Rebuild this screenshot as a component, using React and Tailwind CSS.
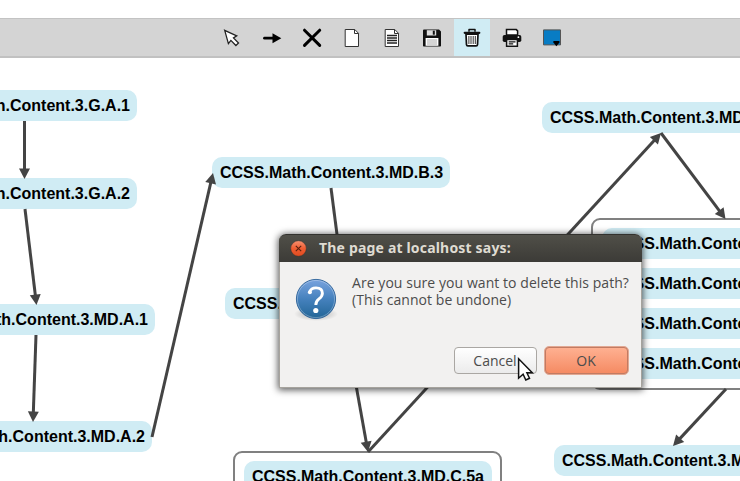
import React from "react";

const NODES = [
  { label: "CCSS.Math.Content.3.G.A.1", pos: "right-[603px] top-[32.4px]" },
  { label: "CCSS.Math.Content.3.G.A.2", pos: "right-[603px] top-[120.4px]" },
  { label: "CCSS.Math.Content.3.MD.A.1", pos: "right-[585px] top-[246.4px]" },
  { label: "CCSS.Math.Content.3.MD.A.2", pos: "right-[588px] top-[363.4px]" },
  { label: "CCSS.Math.Content.3.MD.B.3", pos: "left-[211.5px] top-[99.4px]" },
  { label: "CCSS.Math.Content.3.MD.B.4", pos: "left-[224.5px] top-[230.4px]" },
  { label: "CCSS.Math.Content.3.MD.C.6", pos: "left-[541.5px] top-[44.4px]" },
  { label: "CCSS.Math.Content.3.MD.D.8", pos: "left-[553.5px] top-[387.4px]" },
];

const EDGES = [
  [24.5, 121, 24.5, 179],
  [25, 209, 36.5, 305],
  [36, 335, 33, 422],
  [152, 437, 213, 173],
  [331, 188, 346, 304],
  [349, 346, 368, 452],
  [368, 452, 661, 133],
  [661, 133, 725.5, 219],
  [726, 389, 673, 446],
];

function Node({ label, className = "" }) {
  return (
    <div className={`flex h-[31px] items-center whitespace-nowrap rounded-[10px] bg-[#d0ecf4] pl-[8.5px] pr-[7px] text-base font-bold text-black ${className}`}>
      {label}
    </div>
  );
}

function Edge({ points }) {
  const [x1, y1, x2, y2] = points;
  const length = Math.hypot(x2 - x1, y2 - y1);
  const angle = (Math.atan2(y2 - y1, x2 - x1) * 180) / Math.PI;
  return (
    <g transform={`translate(${x1} ${y1}) rotate(${angle})`}>
      <path d={`M0 0H${length - 6}`} stroke="#444" strokeWidth="3" />
      <path d={`M${length} 0l-10.5 -5.5v11z`} fill="#444" />
    </g>
  );
}

function ToolButton({ active, children }) {
  return (
    <button className={`flex h-[37px] w-9 items-center justify-center ${active ? "bg-[#d0ecf4]" : ""}`}>
      <svg width="20" height="20" viewBox="0 0 20 20" fill="none">{children}</svg>
    </button>
  );
}

function Toolbar() {
  return (
    <div className="flex h-10 gap-1 border-t border-b-2 border-t-[#c3c3c3] border-b-[#c1c1c1] bg-[#d4d4d4] pl-[214px]">
      <ToolButton>
        <path d="M4.6 2.7l12 5.6-3.2 2 5 5.1-2.6 2.5-5-5.1-2.5 3.2z" transform="translate(-1.9 -.4)" fill="#fff" stroke="#222" strokeWidth="1.3" />
      </ToolButton>
      <ToolButton>
        <path d="M2.5 10.2H12" stroke="#000" strokeWidth="2.8" strokeLinecap="round" />
        <path d="M10.5 5.2l8.8 5-8.8 5z" fill="#000" />
      </ToolButton>
      <ToolButton>
        <path d="M2.5 2.2l15.2 15.2M17.7 2.2L2.5 17.4" stroke="#000" strokeWidth="3" strokeLinecap="round" />
      </ToolButton>
      <ToolButton>
        <path d="M3.2 1.5h9.6l3.7 3.8v13.2H3.2z" fill="#fff" stroke="#333" />
        <path d="M12.5 1.5v4h4" stroke="#333" />
      </ToolButton>
      <ToolButton>
        <path d="M3.2 1.5h9.6l3.7 3.8v13.2H3.2z" fill="#fff" stroke="#333" />
        <path d="M12.5 1.5v4h4" stroke="#333" />
        <path d="M5 7.5h10M5 10h10M5 12.5h10M5 15h10" stroke="#222" strokeWidth="1.4" />
      </ToolButton>
      <ToolButton>
        <path d="M1 2.5Q1 1.5 2 1.5h15L19 3.5v14.2q0 .8-.8.8H1.8q-.8 0-.8-.8z" fill="#111" />
        <path d="M4.8 2.2h9.4v5.3H4.8z" fill="#ddd" />
        <path d="M10.8 2.7h2v4h-2z" fill="#111" />
        <path d="M3.6 10h12.8v7.8H3.6z" fill="#fff" />
        <path d="M5 12h10M5 14h10M5 16h10" stroke="#aaa" />
      </ToolButton>
      <ToolButton active>
        <path d="M7 3.7V1.6h6v2.1" stroke="#111" strokeWidth="1.5" strokeLinejoin="round" />
        <path d="M2.7 4.8h14.6" stroke="#111" strokeWidth="2.2" strokeLinecap="round" />
        <path d="M4 6.2h12l-.5 10.4q-.1 1.3-1.3 1.3H5.8q-1.2 0-1.3-1.3z" fill="#fff" stroke="#111" strokeWidth="1.7" />
        <path d="M6.9 8v8M9 8v8M11.2 8v8M13.3 8v8" stroke="#333" strokeWidth="1" />
      </ToolButton>
      <ToolButton>
        <path d="M4.5 7V1.6h9.8l1.3 1.3V7z" fill="#fff" stroke="#111" strokeWidth="1.5" />
        <path d="M2.5 7h15q1.8 0 1.8 1.8v3.4q0 1.8-1.8 1.8h-15Q.7 14 .7 12.2V8.8Q.7 7 2.5 7z" fill="#111" />
        <circle cx="16.4" cy="9.2" r=".9" fill="#fff" />
        <path d="M4.6 11.5h10.8v6.8H4.6z" fill="#fff" stroke="#111" strokeWidth="1.5" />
        <path d="M6.7 13.8h6.8M6.7 15.9h4.5" stroke="#111" strokeWidth="1.2" />
      </ToolButton>
      <ToolButton>
        <path d="M1.5 1.9h17v15h-17z" fill="#087cc4" stroke="#555" />
        <path d="M11.4 13.1h6v1.5L14.4 18.3l-3-3.7z" fill="#000" />
      </ToolButton>
    </div>
  );
}

function ConfirmDialog() {
  return (
    <div className="absolute left-[279px] top-[176px] flex h-[154px] w-[363px] flex-col rounded-t-[7px] bg-[#f2f1f0] font-['Open_Sans',sans-serif] shadow-[0_1px_7px_1px_rgba(0,0,0,0.65)]">
      <div className="flex h-7 shrink-0 items-center rounded-t-[7px] border-t border-[#33322e] bg-linear-to-b from-[#504f48] to-[#3c3b37] pl-[11px]">
        <svg width="17" height="17" viewBox="0 0 17 17">
          <defs>
            <linearGradient id="close" x2="0" y2="1">
              <stop stopColor="#f79070" />
              <stop offset=".5" stopColor="#ef5d32" />
              <stop offset="1" stopColor="#df4b20" />
            </linearGradient>
          </defs>
          <circle cx="8.5" cy="8.5" r="7.8" fill="url(#close)" stroke="#35332f" strokeWidth=".5" />
          <path d="M5.8 5.8l5.4 5.4M11.2 5.8l-5.4 5.4" stroke="#58200f" strokeWidth="1.1" />
        </svg>
        <span className="-mt-0.5 ml-3 whitespace-nowrap font-['Noto_Sans',sans-serif] text-[14px] font-bold tracking-[0.18px] text-[#dfdbd2]">The page at localhost says:</span>
      </div>
      <div className="flex grow flex-col border-x border-b border-[#a6a39d] pr-3">
        <div className="flex pt-3 pl-[14px]">
          <svg className="mt-1 shrink-0" width="44" height="44" viewBox="0 0 44 44">
            <defs>
              <linearGradient id="ball" x2="0" y2="1">
                <stop stopColor="#7aa4df" />
                <stop offset=".5" stopColor="#4581bd" />
                <stop offset="1" stopColor="#226596" />
              </linearGradient>
              <radialGradient id="shade">
                <stop stopColor="#000" stopOpacity=".3" />
                <stop offset="1" stopColor="#000" stopOpacity="0" />
              </radialGradient>
            </defs>
            <ellipse cx="22" cy="36" rx="22" ry="7" fill="url(#shade)" />
            <circle cx="22" cy="21" r="19.6" fill="url(#ball)" stroke="#285f96" strokeWidth=".9" />
            <circle cx="22" cy="21" r="18.6" fill="none" stroke="#fff" strokeOpacity=".28" />
            <path d="M15.6 14.2Q17 9.9 22 9.9Q28.4 9.9 28.4 15.2Q28.4 18.3 25 20.8Q21.8 23.2 21.8 27" fill="none" stroke="#fff" strokeWidth="2.9" />
            <circle cx="15.9" cy="14.3" r="2" fill="#fff" />
            <circle cx="21.8" cy="32.5" r="2.6" fill="#fff" />
          </svg>
          <p className="ml-[14px] whitespace-nowrap text-[14px] leading-[17px] tracking-[0.06px] text-[#4c4c4c]">
            Are you sure you want to delete this path?
            <br />
            (This cannot be undone)
          </p>
        </div>
        <div className="mt-auto mb-3 flex items-center justify-end gap-[7px] text-[14px] leading-none text-[#4c4c4c]">
          <button className="flex h-[27px] w-[83px] items-center justify-center rounded-[4px] border border-[#aaa7a3] bg-linear-to-b from-white to-[#ebebeb] pr-px">Cancel</button>
          <button className="flex h-[29px] w-[85px] items-center justify-center rounded-[5px] border border-[#e2a893] bg-[#e2a893]">
            <span className="flex size-full items-center justify-center rounded-[4px] border border-[#c27b62] bg-linear-to-b from-[#feb091] to-[#f58b63] pr-px">OK</span>
          </button>
        </div>
      </div>
    </div>
  );
}

export default function App() {
  return (
    <div className="flex h-[481px] w-[740px] flex-col overflow-hidden bg-white pt-[18px] font-['Liberation_Sans',Arial,sans-serif]">
      <Toolbar />
      <main className="relative grow overflow-hidden">
        {NODES.map((node) => (
          <Node key={node.label} label={node.label} className={`absolute ${node.pos}`} />
        ))}
        <div className="absolute left-[591px] top-[160px] flex h-[172px] w-[269px] flex-col gap-[9px] rounded-[9px] border-2 border-[#808080] px-[9px] pt-[8.4px]">
          <Node label="CCSS.Math.Content.3.MD.C.7a" />
          <Node label="CCSS.Math.Content.3.MD.C.7b" />
          <Node label="CCSS.Math.Content.3.MD.C.7c" />
          <Node label="CCSS.Math.Content.3.MD.C.7d" />
        </div>
        <div className="absolute left-[233px] top-[393px] flex h-[100px] w-[269px] flex-col gap-[9px] rounded-[9px] border-2 border-[#808080] px-[8.5px] pt-2">
          <Node label="CCSS.Math.Content.3.MD.C.5a" />
        </div>
        <svg className="absolute left-0 -top-[58px]" width="740" height="481">
          {EDGES.map((points) => (
            <Edge key={points.join("-")} points={points} />
          ))}
        </svg>
        <ConfirmDialog />
        <svg className="absolute left-[517px] top-[299px]" width="18" height="26" viewBox="0 0 18 26">
          <path d="M1.6 1.8v19.4l4.5-3.9 2.7 5.7 3.7-1.7-2.6-5.5h5.4z" fill="#fff" stroke="#111" strokeWidth="1.5" />
        </svg>
      </main>
    </div>
  );
}
